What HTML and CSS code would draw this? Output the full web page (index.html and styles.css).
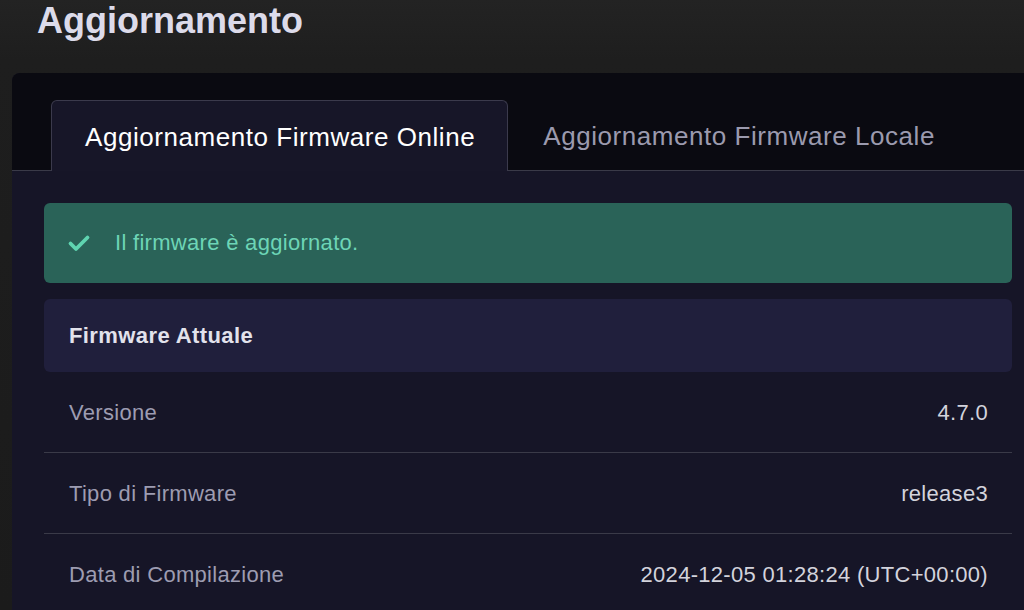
FILE: index.html
```html
<!DOCTYPE html>
<html lang="it">
<head>
<meta charset="utf-8">
<title>Aggiornamento</title>
<link rel="stylesheet" href="styles.css">
</head>
<body>
<h1 class="page-title">Aggiornamento</h1>
<section class="card">
  <div class="tabs">
    <div class="tab tab-active">Aggiornamento Firmware Online</div>
    <div class="tab">Aggiornamento Firmware Locale</div>
  </div>
  <div class="card-body">
    <div class="alert">
      <svg class="alert-icon" viewBox="0 0 24 24" width="24" height="24" aria-hidden="true">
        <path d="M3.5 12.5l5.5 5.5L20.5 6.5" fill="none" stroke="currentColor" stroke-width="3.8" stroke-linecap="round" stroke-linejoin="round"/>
      </svg>
      <span>Il firmware è aggiornato.</span>
    </div>
    <div class="section-head">Firmware Attuale</div>
    <div class="row"><span class="label">Versione</span><span class="value">4.7.0</span></div>
    <div class="row"><span class="label">Tipo di Firmware</span><span class="value">release3</span></div>
    <div class="row"><span class="label">Data di Compilazione</span><span class="value">2024-12-05 01:28:24 (UTC+00:00)</span></div>
  </div>
</section>
</body>
</html>
```

FILE: styles.css
```css
html, body {
  margin: 0;
  padding: 0;
  height: 100%;
  overflow: hidden;
}
body {
  background: linear-gradient(#232323, #1e1e1e 60px, #1b1b1b);
  font-family: "Liberation Sans", Arial, sans-serif;
  color: #d8d8e4;
}
.page-title {
  margin: 0;
  padding: 0 0 0 37px;
  height: 73px;
  font-size: 36px;
  line-height: 42px;
  font-weight: 700;
  color: #dcdbea;
}
.card {
  margin-left: 12px;
  width: 1032px;
  background: #161527;
  border-radius: 8px 0 0 0;
  overflow: hidden;
}
.tabs {
  display: flex;
  align-items: flex-end;
  padding: 27px 0 0 39px;
  background: #0a0a11;
  border-bottom: 1px solid #3a3a48;
}
.tab {
  height: 70px;
  padding: 3px 32px 0 35px;
  display: flex;
  align-items: center;
  font-size: 26px;
  letter-spacing: 0.55px;
  color: #9b9aae;
  box-sizing: border-box;
}
.tab-active {
  background: #171628;
  color: #ffffff;
  border: 1px solid #3b3a4c;
  border-bottom: none;
  border-radius: 6px 6px 0 0;
  margin-bottom: -1px;
  height: 71px;
  padding: 2px 32px 0 33px;
}
.card-body {
  padding: 32px 32px 0 32px;
}
.alert {
  height: 80px;
  box-sizing: border-box;
  display: flex;
  align-items: center;
  gap: 24px;
  padding-left: 23px;
  background: #2a6358;
  border-radius: 6px;
  color: #6dd5b6;
  font-size: 22px;
  letter-spacing: 0.3px;
}
.alert-icon {
  color: #5fd4b0;
  flex: none;
}
.section-head {
  margin-top: 16px;
  height: 73px;
  display: flex;
  align-items: center;
  padding: 1px 0 0 25px;
  box-sizing: border-box;
  background: #201f3c;
  border-radius: 6px;
  font-size: 22px;
  letter-spacing: 0.4px;
  font-weight: 700;
  color: #e2e2ec;
}
.row {
  height: 81px;
  box-sizing: border-box;
  display: flex;
  align-items: center;
  justify-content: space-between;
  padding: 1px 24px 0 25px;
  border-bottom: 1px solid #3a3a48;
  font-size: 22px;
  letter-spacing: 0.3px;
}
.label {
  color: #9d9cb1;
}
.value {
  color: #d3d3dc;
}
```
